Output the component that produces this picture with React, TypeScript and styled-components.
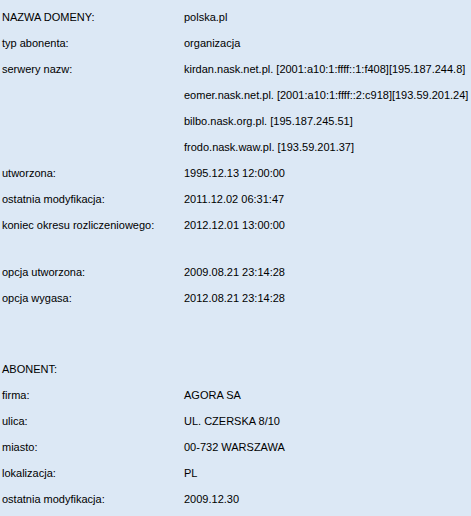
import React from 'react';
import styled, { createGlobalStyle } from 'styled-components';

const GlobalStyle = createGlobalStyle`
  html, body {
    margin: 0;
    padding: 0;
    background: #dce8f5;
  }
`;

const Sheet = styled.div`
  width: 471px;
  min-height: 516px;
  padding: 4px 0 0 2px;
  box-sizing: border-box;
  background: #dce8f5;
  color: #000;
  font-family: 'Liberation Sans', Arial, sans-serif;
  font-size: 11px;
  overflow: hidden;
`;

const Row = styled.div`
  display: grid;
  grid-template-columns: 182px 1fr;
  height: 26px;
  line-height: 26px;
  white-space: nowrap;
`;

const Label = styled.span``;

const Value = styled.span``;

const Spacer = styled.div<{ $h: number }>`
  height: ${({ $h }) => $h}px;
`;

type Entry = [string, string] | number;

const entries: Entry[] = [
  [`NAZWA DOMENY:`, `polska.pl`],
  [`typ abonenta:`, `organizacja`],
  [`serwery nazw:`, `kirdan.nask.net.pl. [2001:a10:1:ffff::1:f408][195.187.244.8]`],
  [``, `eomer.nask.net.pl. [2001:a10:1:ffff::2:c918][193.59.201.24]`],
  [``, `bilbo.nask.org.pl. [195.187.245.51]`],
  [``, `frodo.nask.waw.pl. [193.59.201.37]`],
  [`utworzona:`, `1995.12.13 12:00:00`],
  [`ostatnia modyfikacja:`, `2011.12.02 06:31:47`],
  [`koniec okresu rozliczeniowego:`, `2012.12.01 13:00:00`],
  21,
  [`opcja utworzona:`, `2009.08.21 23:14:28`],
  [`opcja wygasa:`, `2012.08.21 23:14:28`],
  45,
  [`ABONENT:`, ``],
  [`firma:`, `AGORA SA`],
  [`ulica:`, `UL. CZERSKA 8/10`],
  [`miasto:`, `00-732 WARSZAWA`],
  [`lokalizacja:`, `PL`],
  [`ostatnia modyfikacja:`, `2009.12.30`],
];

export default function App() {
  return (
    <>
      <GlobalStyle />
      <Sheet>
        {entries.map((entry, i) =>
          typeof entry === `number` ? (
            <Spacer key={i} $h={entry} />
          ) : (
            <Row key={i}>
              <Label>{entry[0]}</Label>
              <Value>{entry[1]}</Value>
            </Row>
          ),
        )}
      </Sheet>
    </>
  );
}
